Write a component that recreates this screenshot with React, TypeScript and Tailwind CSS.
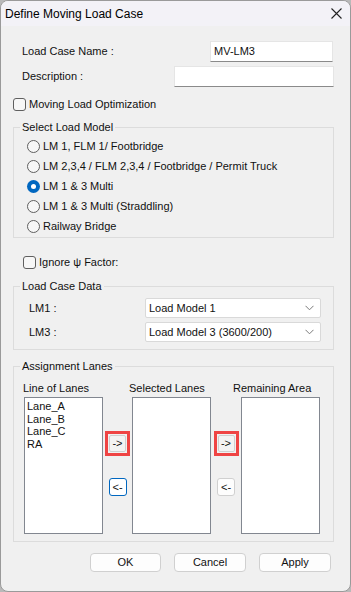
const Radio = ({ checked, label }: { checked?: boolean; label: string }) => (
  <div className="flex items-center h-[20px]">
    {checked ? (
      <span className="w-[13px] h-[13px] rounded-full bg-[#0067c0] flex items-center justify-center">
        <span className="w-[5px] h-[5px] rounded-full bg-white" />
      </span>
    ) : (
      <span className="w-[13px] h-[13px] rounded-full border border-[#5f5f5f] bg-[#f7f7f7]" />
    )}
    <span className="ml-[3px]">{label}</span>
  </div>
);

const Checkbox = ({ label }: { label: string }) => (
  <div className="flex items-center h-[13px]">
    <span className="w-[13px] h-[13px] rounded-[3px] border border-[#5f5f5f] bg-[#f7f7f7]" />
    <span className="ml-[3px]">{label}</span>
  </div>
);

const Select = ({ value }: { value: string }) => (
  <div className="w-[176px] h-[20px] bg-white border border-[#d9d9d9] rounded-[2px] flex items-center justify-between pl-[3px] pr-[6px]">
    <span>{value}</span>
    <svg width="9" height="6" viewBox="0 0 9 6" fill="none">
      <path d="M0.5 0.8 L4.5 4.8 L8.5 0.8" stroke="#7a7a7a" strokeWidth="1" />
    </svg>
  </div>
);

const Group = ({ title, children, className }: { title: string; children: React.ReactNode; className?: string }) => (
  <fieldset className={`border border-[#dcdcdc] px-0 pb-0 ${className ?? ""}`}>
    <legend className="ml-[6px] px-[2px] leading-[13px]">{title}</legend>
    {children}
  </fieldset>
);

const Btn = ({ label, className }: { label: string; className?: string }) => (
  <div className={`h-[19px] bg-[#fdfdfd] border border-[#d0d0d0] rounded-[4px] flex items-center justify-center ${className ?? ""}`}>
    {label}
  </div>
);

const ArrowBtn = ({ label, focused }: { label: string; focused?: boolean }) => (
  <div
    className={`w-[18px] h-[18px] rounded-[3px] flex items-center justify-center text-[11px] ${
      focused ? "border border-[#0067c0] bg-white" : "border border-[#d0d0d0] bg-[#fdfdfd]"
    }`}
  >
    {label}
  </div>
);

const HighlightBtn = () => (
  <div className="w-[25px] h-[25px] border-[3px] border-[#ef4444] flex items-center justify-center">
    <div className="w-[17px] h-[17px] rounded-[2px] border border-[#cfcfcf] bg-[#f3f3f3] flex items-center justify-center text-[11px]">
      -&gt;
    </div>
  </div>
);

const ListBox = ({ items }: { items?: string[] }) => (
  <div className="w-[79px] h-[137px] bg-white border border-[#828790] pt-[2px] pl-[2px] leading-[12.7px]">
    {items?.map((t) => (
      <div key={t}>{t}</div>
    ))}
  </div>
);

export default function App() {
  return (
    <div className="w-[351px] h-[592px] bg-[#b9b9b9]">
      <div className="w-[351px] h-[592px] bg-[#f0f0f0] border border-[#9a9a9a] rounded-t-[8px] rounded-b-[8px] overflow-hidden flex flex-col font-['Liberation_Sans',sans-serif] text-[11px] text-[#111]">
        {/* title bar */}
        <div className="h-[25px] shrink-0 bg-[#f3f2f7] flex items-center justify-between pl-[4px] pr-[8px]">
          <span className="text-[12px] text-black">Define Moving Load Case</span>
          <svg width="11" height="11" viewBox="0 0 11 11">
            <path d="M0.5 0.5 L10.5 10.5 M10.5 0.5 L0.5 10.5" stroke="#222" strokeWidth="1.1" />
          </svg>
        </div>

        <div className="pl-[12px] pr-[16px] flex flex-col">
          {/* name */}
          <div className="mt-[15px] h-[21px] flex items-center">
            <span className="ml-[9px]">Load Case Name :</span>
            <div className="ml-auto mr-[1px] w-[123px] h-[21px] bg-white border border-[#e5e5e5] border-b-[#8a8a8a] flex items-center pl-[3px]">
              MV-LM3
            </div>
          </div>
          <div className="mt-[4px] h-[21px] flex items-center">
            <span className="ml-[9px]">Description :</span>
            <div className="ml-auto w-[160px] h-[21px] bg-white border border-[#e5e5e5] border-b-[#8a8a8a]" />
          </div>
          <div className="mt-[11px]">
            <Checkbox label="Moving Load Optimization" />
          </div>

          <Group title="Select Load Model" className="mt-[10px]">
            <div className="pl-[13px] pt-[2px] pb-[1px]">
              <Radio label="LM 1, FLM 1/ Footbridge" />
              <Radio label="LM 2,3,4 / FLM 2,3,4 / Footbridge / Permit Truck" />
              <Radio checked label="LM 1 & 3 Multi" />
              <Radio label="LM 1 & 3 Multi (Straddling)" />
              <Radio label="Railway Bridge" />
            </div>
          </Group>

          <div className="mt-[18px] ml-[10px]">
            <Checkbox label="Ignore ψ Factor:" />
          </div>

          <Group title="Load Case Data" className="mt-[11px]">
            <div className="pl-[15px] pt-[5px] pb-[7px] flex flex-col gap-[4px]">
              <div className="flex items-center">
                <span className="w-[116px]">LM1 :</span>
                <Select value="Load Model 1" />
              </div>
              <div className="flex items-center">
                <span className="w-[116px]">LM3 :</span>
                <Select value="Load Model 3 (3600/200)" />
              </div>
            </div>
          </Group>

          <Group title="Assignment Lanes" className="mt-[10px]">
            <div className="pt-[8px] pb-[7px]">
              <div className="flex h-[14px] items-center pl-[9px]">
                <span className="w-[106px]">Line of Lanes</span>
                <span className="w-[104px]">Selected Lanes</span>
                <span>Remaining Area</span>
              </div>
              <div className="mt-[2px] flex pl-[10px]">
                <ListBox items={["Lane_A", "Lane_B", "Lane_C", "RA"]} />
                <div className="w-[29px] flex flex-col items-center pt-[34px]">
                  <HighlightBtn />
                  <div className="mt-[22px]">
                    <ArrowBtn label="<-" focused />
                  </div>
                </div>
                <ListBox />
                <div className="w-[30px] flex flex-col items-center pt-[34px]">
                  <HighlightBtn />
                  <div className="mt-[22px]">
                    <ArrowBtn label="<-" />
                  </div>
                </div>
                <ListBox />
              </div>
            </div>
          </Group>

          <div className="mt-[11px] flex justify-end gap-[13px] mr-[3px]">
            <Btn label="OK" className="w-[71px]" />
            <Btn label="Cancel" className="w-[72px]" />
            <Btn label="Apply" className="w-[72px]" />
          </div>
        </div>
      </div>
    </div>
  );
}
